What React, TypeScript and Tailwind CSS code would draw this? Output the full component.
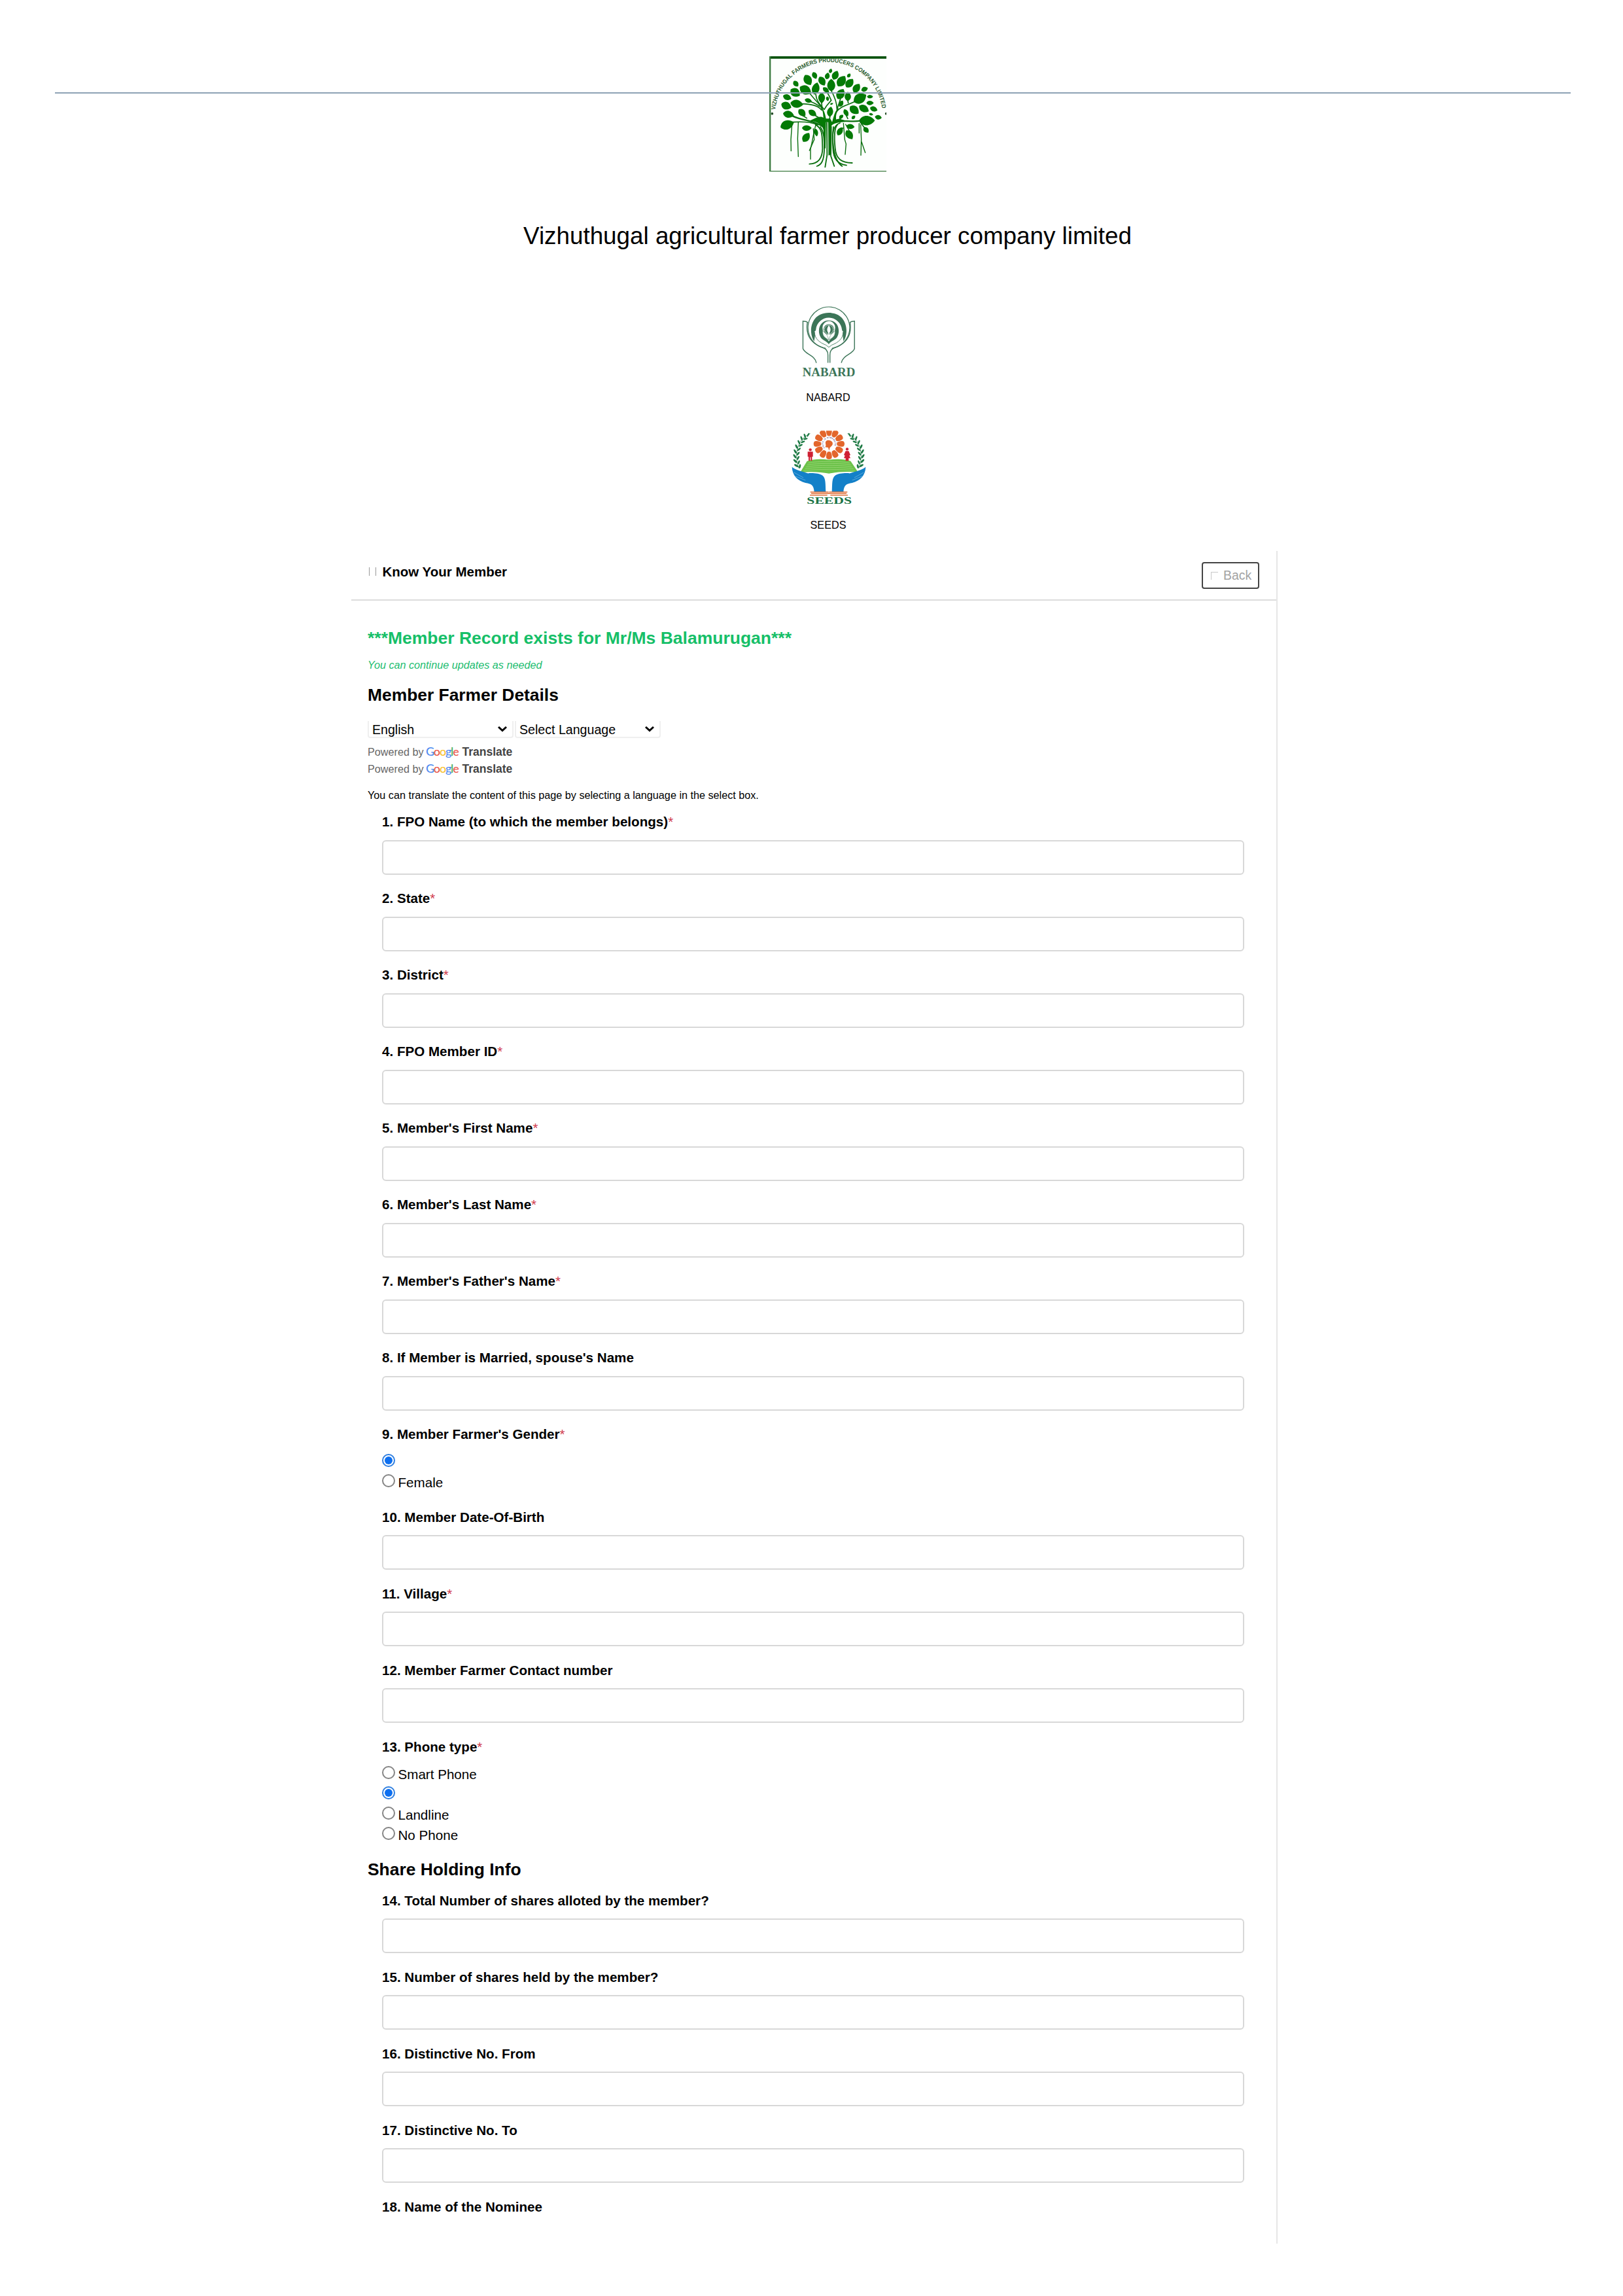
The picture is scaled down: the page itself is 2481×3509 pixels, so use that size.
import React from "react";

type Leaf = [number, number, number, number, number];

const LEAVES: Leaf[] = [
  [200, 174, 30, 20, 50], [255, 157, 50, 32, 60], [286, 136, 32, 20, 65], [320, 162, 44, 27, 60],
  [344, 138, 30, 19, -75], [359, 115, 20, 13, -70], [381, 135, 42, 26, -65], [409, 162, 54, 34, -55],
  [443, 136, 20, 13, -50], [446, 171, 46, 30, -50], [478, 194, 44, 28, -55], [515, 199, 30, 19, -20],
  [494, 241, 62, 40, -30], [540, 233, 26, 14, 0], [540, 262, 32, 18, 0], [557, 290, 34, 20, 20],
  [545, 314, 18, 10, 10], [578, 328, 30, 18, 8], [526, 343, 68, 38, 0], [512, 288, 48, 28, 30],
  [468, 294, 48, 32, 40], [405, 221, 50, 32, -60], [438, 232, 40, 25, -90], [407, 265, 30, 18, -60],
  [362, 180, 54, 32, -90], [338, 203, 34, 18, 40], [318, 240, 46, 27, 90], [291, 196, 54, 30, -75],
  [244, 203, 56, 36, 30], [197, 214, 48, 34, 35], [160, 236, 38, 23, 20], [204, 266, 56, 32, 8],
  [257, 251, 32, 17, 15], [156, 275, 46, 30, 20], [166, 314, 48, 28, 10], [160, 362, 62, 36, -20],
  [228, 307, 40, 26, 45], [276, 308, 40, 24, 35], [345, 243, 20, 12, 80], [364, 266, 14, 7, -20],
  [357, 302, 44, 24, -80], [408, 325, 22, 14, -40], [430, 307, 34, 18, 60], [464, 328, 20, 13, -45],
  [250, 377, 42, 22, 0], [247, 420, 46, 28, -55], [293, 398, 34, 15, 80], [402, 392, 40, 22, -60],
  [450, 370, 36, 20, 5], [445, 408, 46, 28, 55], [522, 386, 30, 20, 50],
];

function TreeLogo() {
  return (
    <svg width="230" height="210" viewBox="0 0 690 630" className="block">
      <rect x="78" y="48" width="537" height="528" fill="#fdfffd" />
      <defs>
        <path id="arc" d="M105 294 A247 247 0 0 1 596 294" />
        <clipPath id="frame"><rect x="82" y="59" width="533" height="520" /></clipPath>
      </defs>
      <g clipPath="url(#frame)">
        <text fontFamily="Liberation Sans" fontWeight="700" fontSize="27" fill="#2b5c2e">
          <textPath href="#arc" textLength="715" lengthAdjust="spacingAndGlyphs">
            VIZHUTHUGAL FARMERS PRODUCERS COMPANY LIMITED
          </textPath>
        </text>
        <circle cx="91" cy="311" r="5.5" fill="#234c26" />
        <circle cx="614" cy="311" r="5.5" fill="#234c26" />
      </g>
      <g fill="#047a06">
        {LEAVES.map(([x, y, l, w, a], i) => (
          <path
            key={i}
            transform={`translate(${x} ${y}) rotate(${a}) scale(1.06 1.18)`}
            d={`M${-l / 2} 0 C${-l * 0.3} ${-w * 0.65} ${l * 0.2} ${-w * 0.65} ${l / 2} 0 C${l * 0.2} ${w * 0.65} ${-l * 0.3} ${w * 0.65} ${-l / 2} 0Z`}
          />
        ))}
        <path d="M300 268 C322 284 325 305 326 330 C308 318 285 335 262 344 C290 346 320 356 326 385 L329 470 L336 470 L338 350 L348 350 L352 500 L360 500 L360 372 C370 350 410 352 440 346 C415 340 395 330 385 338 C380 316 392 300 396 284 C378 296 372 330 366 350 L358 334 L338 334 C334 310 328 284 300 268Z" />
      </g>
      <g fill="none" stroke="#0b6f0f" strokeLinecap="round">
        <g strokeWidth="5">
          <path d="M225 266 C270 268 300 272 318 295" />
          <path d="M262 215 C285 250 310 262 320 292" />
          <path d="M291 222 C294 255 312 270 328 290" />
          <path d="M318 262 L320 286 M257 253 Q290 262 308 278" />
          <path d="M362 205 C378 235 388 262 388 288" />
          <path d="M405 240 C400 260 394 275 388 292" />
          <path d="M470 256 C430 275 405 276 384 305" />
          <path d="M338 206 Q352 225 362 250 L340 276 L330 292" />
          <path d="M185 322 C235 345 280 340 326 372" strokeWidth="7" />
          <path d="M185 350 C240 346 275 352 300 362" />
          <path d="M228 318 L250 332 M286 318 L312 334 L328 340" />
          <path d="M384 345 C430 342 460 350 495 344" strokeWidth="7" />
          <path d="M357 322 L352 345 M404 334 L384 346 M430 318 L438 334" />
          <path d="M438 250 L440 262 M495 350 L516 378" />
        </g>
        <g strokeWidth="4.2">
          <path d="M182 360 L177 430 L178 482" />
          <path d="M211 350 L208 425 L211 508" />
          <path d="M292 360 C280 400 276 440 267 472 L267 520" />
          <path d="M280 380 L284 430 L262 480" />
          <path d="M418 355 L424 430 L430 450 L426 498" />
          <path d="M428 360 L446 392 M418 376 L408 384" />
          <path d="M490 356 L490 400 M497 362 L500 430 L498 502 M501 440 L518 490" />
        </g>
        <g strokeWidth="5.5">
          <path d="M290 362 C325 380 320 420 322 470 C322 520 300 540 262 542" />
          <path d="M312 372 C332 400 330 440 330 480 C328 525 318 545 296 552" />
          <path d="M342 352 L343 500 L334 556" />
          <path d="M352 352 L352 500 M362 370 L360 505 L376 552" />
          <path d="M372 372 C366 420 366 520 412 552" />
          <path d="M390 362 C374 380 376 430 380 470 C384 520 410 536 458 537" />
          <path d="M402 354 C366 366 366 410 370 470 C372 520 392 542 432 548" />
        </g>
      </g>
      <path d="M78 48H615V59H78Z" fill="#07520c" />
      <path d="M78 48H85V576H78Z" fill="#3c7a40" />
      <path d="M78 573H615V576.500H78Z" fill="#3c7a40" />
    </svg>
  );
}

function NabardLogo() {
  return (
    <svg width="94" height="114" viewBox="118 74 280 340" className="block">
      <g fill="none" stroke="#3c7558" strokeWidth="4.2">
        <path d="M244 275 A95 95 0 1 1 272 275" strokeWidth="3.5" />
        <path d="M163 158 L155 153 L140 151 V276 C148 302 194 304 201 341" />
        <path d="M353 158 L361 153 L375 151 V276 C367 302 323 304 315 341" />
        <path d="M160 158 C150 225 185 254 226 270 C244 274 254 286 254 306 V341" />
        <path d="M355 158 C365 225 330 254 290 270 C272 274 263 286 263 306 V341" />
      </g>
      <path d="M191 243 C164 205 172 113 258 113 C344 113 351 205 325 243 L318 190 C310 120 205 120 199 190Z" fill="#3c7558" />
      <path d="M193 198 C193 232 215 248 245 260 L258 270 L271 260 C301 248 323 232 323 198 L313 190 A55 55 0 0 0 203 190Z" fill="#fff" />
      <path d="M193 200 C193 232 215 248 245 260 L258 270 L271 260 C301 248 323 232 323 200" fill="none" stroke="#3c7558" strokeWidth="2.5" />
      <path d="M221 225 C203 195 215 148 258 148 C301 148 313 195 295 225 C285 240 265 242 258 257 C251 242 231 240 221 225Z" fill="#3c7558" />
      <path d="M229 180 L233 215 C240 228 252 231 258 243 C264 231 276 228 283 215 L287 180 A29 29 0 0 0 229 180Z" fill="#fff" />
      <circle cx="258" cy="189" r="24" fill="#3c7558" />
      <circle cx="258" cy="189" r="20" fill="none" stroke="#fff" strokeWidth="2" />
      <path d="M258 170 C268 185 268 192 260 206 V240 H256 V206 C248 192 248 185 258 170Z" fill="#fff" />
      <path d="M229 196 C242 205 253 213 257 236 C240 225 230 222 229 196Z M287 196 C274 205 263 213 259 236 C276 225 286 222 287 196Z" fill="#fff" stroke="#3c7558" strokeWidth="1.500" />
      <text x="138" y="402" fontFamily="Liberation Serif" fontWeight="700" fontSize="59" fill="#3c7558" textLength="240" lengthAdjust="spacingAndGlyphs">
        NABARD
      </text>
    </svg>
  );
}

const LAUREL: Leaf[] = [
  [162, 676, 20, 7, -60], [147, 680, 20, 8, -110], [150, 694, 20, 8, -10], [132, 692, 22, 8, -110], [138, 708, 20, 8, -20],
  [120, 710, 22, 8, -115], [128, 724, 20, 8, -30], [109, 730, 22, 9, -115], [120, 742, 20, 8, -40], [103, 752, 22, 9, -120],
  [116, 762, 20, 8, -50], [101, 774, 22, 9, -125], [116, 782, 20, 8, -60], [103, 796, 22, 9, -135], [119, 802, 20, 8, -70],
  [108, 817, 22, 9, -150], [124, 820, 20, 9, -80],
];

function Laurel() {
  return (
    <g fill="#1f7a45">
      {LAUREL.map(([x, y, l, w, a], i) => (
        <ellipse key={i} cx={x} cy={y} rx={l / 2} ry={w / 2} transform={`rotate(${a} ${x} ${y})`} />
      ))}
      <path d="M172 670 C120 690 95 750 118 828" fill="none" stroke="#1f7a45" strokeWidth="2" />
    </g>
  );
}

function Hand() {
  return (
    <g>
      <path d="M88 823 C110 842 170 850 200 866 L210 873 C190 874 172 862 163 852 C180 850 214 852 228 862 C244 875 241 900 243 938 L190 938 C188 905 175 900 150 896 C112 885 90 862 88 823Z" fill="#1380c8" />
      <path d="M97 848 L140 872 M104 866 L150 884" stroke="#7dbde6" strokeWidth="2" />
      <path d="M172 938 H256 M176 945 H258 M170 952 H250" stroke="#e0713a" strokeWidth="4.500" />
    </g>
  );
}

function SeedsLogo() {
  const petals = Array.from({ length: 12 }, (_, i) => i * 30);
  return (
    <svg width="120" height="117" viewBox="77 653 360 351" className="block">
      <clipPath id="seedClip"><rect x="77" y="657" width="360" height="350" /></clipPath>
      <g clipPath="url(#seedClip)">
        {petals.map((a) => (
          <path
            key={a}
            transform={`translate(258 717) rotate(${a}) scale(1.12 1)`}
            d="M-5 -36 C-12 -44 -14 -62 -9 -68 Q0 -74 9 -68 C14 -62 12 -44 5 -36Z"
            fill="#e3662c"
          />
        ))}
        <path id="unity" d="M239 735 A26 26 0 1 1 277 735" fill="none" />
        <text fontFamily="Liberation Sans" fontWeight="700" fontSize="9" fill="#5d4580">
          <textPath href="#unity" textLength="108">UNITY IS STRENGTH</textPath>
        </text>
        <path d="M243 706 C250 696 266 700 272 708 C280 720 268 728 262 734 L258 748 L254 734 L240 732 C248 722 238 716 243 706Z" fill="#e3662c" />
      </g>
      <Laurel />
      <g transform="matrix(-1 0 0 1 514 0)"><Laurel /></g>
      <path d="M157 796 C190 785 225 786 258 790 C291 786 326 785 357 796 L392 848 C340 842 300 846 258 853 C215 846 175 842 124 850Z" fill="#6cc24a" />
      <g fill="none" stroke="#a9dd86" strokeWidth="1.800">
        <path d="M163 804 C200 796 320 796 352 804 M158 813 C200 805 320 805 358 813 M153 822 C200 814 320 814 363 822 M148 831 C200 823 320 823 370 831 M141 840 C200 832 320 832 376 840" />
      </g>
      <g fill="#cf2033">
        <circle cx="172" cy="744" r="6.500" />
        <path d="M160 753 H184 V776 H180 V795 H173.500 V778 H170.500 V795 H164 V776 H160Z" />
        <circle cx="341" cy="741" r="6.500" />
        <path d="M334 750 H348 L356 768 L351 771 L356 783 H348 V795 H334 V783 H326 L331 771 L326 768Z" />
      </g>
      <Hand />
      <g transform="matrix(-1 0 0 1 514 0)"><Hand /></g>
      <text x="156" y="991" fontFamily="Liberation Serif" fontWeight="700" fontSize="42" fill="#1c7446" textLength="206" lengthAdjust="spacingAndGlyphs">
        SEEDS
      </text>
    </svg>
  );
}

function Label({ text, required }: { text: string; required?: boolean }) {
  return (
    <div className="h-6 whitespace-nowrap text-[20.6px] leading-6 font-bold">
      {text}
      {required && <span className="font-normal text-[#cf3a4c]">*</span>}
    </div>
  );
}

function Field({ text, required }: { text: string; required?: boolean }) {
  return (
    <div className="h-[117px]">
      <Label text={text} required={required} />
      <div className="mt-[15.500px] h-[53px] w-[1318px] rounded-[6px] border-2 border-[#d8d8d8]" />
    </div>
  );
}

function Radio({ text, checked }: { text?: string; checked?: boolean }) {
  return (
    <div className="flex h-[31px] items-center">
      <span
        className={
          checked
            ? "flex size-[20px] items-center justify-center rounded-full border-2 border-[#2f7fe0]"
            : "size-[20px] rounded-full border-2 border-[#858585]"
        }
      >
        {checked && <span className="size-[12px] rounded-full bg-[#0d6ff0]" />}
      </span>
      {text && <span className="mt-[5px] ml-[4.500px] text-[20.6px] leading-6">{text}</span>}
    </div>
  );
}

function Chevron() {
  return (
    <svg width="16" height="10" viewBox="0 0 16 10" className="block">
      <path d="M2 2 L8 7.500 L14 2" fill="none" stroke="#000" strokeWidth="3" />
    </svg>
  );
}

function Select({ text }: { text: string }) {
  return (
    <div className="flex h-[26px] w-[223px] items-center justify-between rounded-b-[4px] border-x-2 border-b-2 border-[#efefef] pr-[7px] pl-[5px]">
      <span className="mt-[2px] text-[19.6px] leading-6">{text}</span>
      <Chevron />
    </div>
  );
}

function Powered() {
  return (
    <div className="flex h-[26.400px] items-baseline text-[16.200px] leading-[26px] whitespace-nowrap text-[#666]">
      <span className="w-[89px]">Powered by</span>
      <span className="w-[55.500px] font-['Lato'] text-[18px] leading-[26px] font-medium tracking-[-1.2px]">
        <span className="text-[#4f8bf0]">G</span>
        <span className="text-[#ea5a4e]">o</span>
        <span className="text-[#f7c234]">o</span>
        <span className="text-[#4f8bf0]">g</span>
        <span className="text-[#46b062]">l</span>
        <span className="text-[#ea5a4e]">e</span>
      </span>
      <span className="text-[17.500px] font-bold text-[#444]">Translate</span>
    </div>
  );
}

const MEMBER: [string, boolean][] = [
  ["1. FPO Name (to which the member belongs)", true],
  ["2. State", true],
  ["3. District", true],
  ["4. FPO Member ID", true],
  ["5. Member's First Name", true],
  ["6. Member's Last Name", true],
  ["7. Member's Father's Name", true],
  ["8. If Member is Married, spouse's Name", false],
];

export default function App() {
  return (
    <div className="h-[3509px] w-[2481px] overflow-hidden bg-white font-['Liberation_Sans',sans-serif] text-black">
      <header className="relative flex h-[842px] flex-col items-center pt-[70px] pl-[49px]">
        <TreeLogo />
        <div className="absolute top-[141px] left-[84px] h-[2px] w-[2317px] bg-[#8da2b4]" />
        <h1 className="mt-[58.500px] h-[44px] text-[36.800px] leading-[44px] whitespace-nowrap">
          Vizhuthugal agricultural farmer producer company limited
        </h1>
        <div className="mt-[82px] ml-[3px]"><NabardLogo /></div>
        <div className="mt-[18px] ml-[2px] h-[20px] text-[16.200px] leading-5">NABARD</div>
        <div className="mt-[40px] ml-[3px]"><SeedsLogo /></div>
        <div className="mt-[18px] ml-[2px] h-[20px] text-[16.200px] leading-5">SEEDS</div>
      </header>

      <main className="ml-[537px] h-[2587px] w-[1416px] border-r-2 border-[#e6e6e6]">
        <div className="flex h-[76px] items-start justify-between border-b-2 border-[#dcdcdc] pt-[17px] pr-[26px] pl-[27px]">
          <div className="mt-[2.500px] flex items-center text-[20.500px] leading-6 font-bold">
            <span className="mr-[9.500px] h-[13px] w-[11px] border-x border-[#999]" />
            Know Your Member
          </div>
          <div className="flex h-[41px] w-[88px] items-center rounded-[4px] border-2 border-[#444] pl-[12px] text-[19.400px] text-[#a3a3a3]">
            <span className="mr-[8px] h-[12px] w-[11px] border-t border-l border-[#c8c8c8]" />
            Back
          </div>
        </div>

        <div className="pl-[25px]">
          <div className="mt-[42px] h-[30px] text-[26.500px] leading-[30px] font-bold whitespace-nowrap text-[#16bf68]">
            ***Member Record exists for Mr/Ms Balamurugan***
          </div>
          <div className="mt-[16px] h-[20px] text-[16.200px] leading-5 text-[#1dbd70] italic">
            You can continue updates as needed
          </div>
          <h2 className="mt-[21px] h-[30px] text-[26.400px] leading-[30px] font-bold">Member Farmer Details</h2>
          <div className="mt-[25px] flex gap-[2px]">
            <Select text="English" />
            <Select text="Select Language" />
          </div>
          <div className="mt-[6.500px]">
            <Powered />
            <Powered />
          </div>
          <div className="mt-[17.500px] h-[20px] text-[16.200px] leading-5 whitespace-nowrap">
            You can translate the content of this page by selecting a language in the select box.
          </div>
        </div>

        <div className="mt-[19.500px] pl-[47px]">
          {MEMBER.map(([t, r]) => <Field key={t} text={t} required={r} />)}
          <div className="h-[126.500px]">
            <Label text="9. Member Farmer's Gender" required />
            <div className="mt-[12.500px]">
              <Radio checked />
              <Radio text="Female" />
            </div>
          </div>
          <Field text="10. Member Date-Of-Birth" />
          <Field text="11. Village" required />
          <Field text="12. Member Farmer Contact number" />
          <div>
            <Label text="13. Phone type" required />
            <div className="mt-[12px]">
              <Radio text="Smart Phone" />
              <Radio checked />
              <Radio text="Landline" />
              <Radio text="No Phone" />
            </div>
          </div>
        </div>
        <h2 className="mt-[24px] h-[30px] pl-[25px] text-[26.400px] leading-[30px] font-bold">Share Holding Info</h2>
        <div className="mt-[21px] pl-[47px]">
          <Field text="14. Total Number of shares alloted by the member?" />
          <Field text="15. Number of shares held by the member?" />
          <Field text="16. Distinctive No. From" />
          <Field text="17. Distinctive No. To" />
          <Label text="18. Name of the Nominee" />
        </div>
      </main>
    </div>
  );
}
